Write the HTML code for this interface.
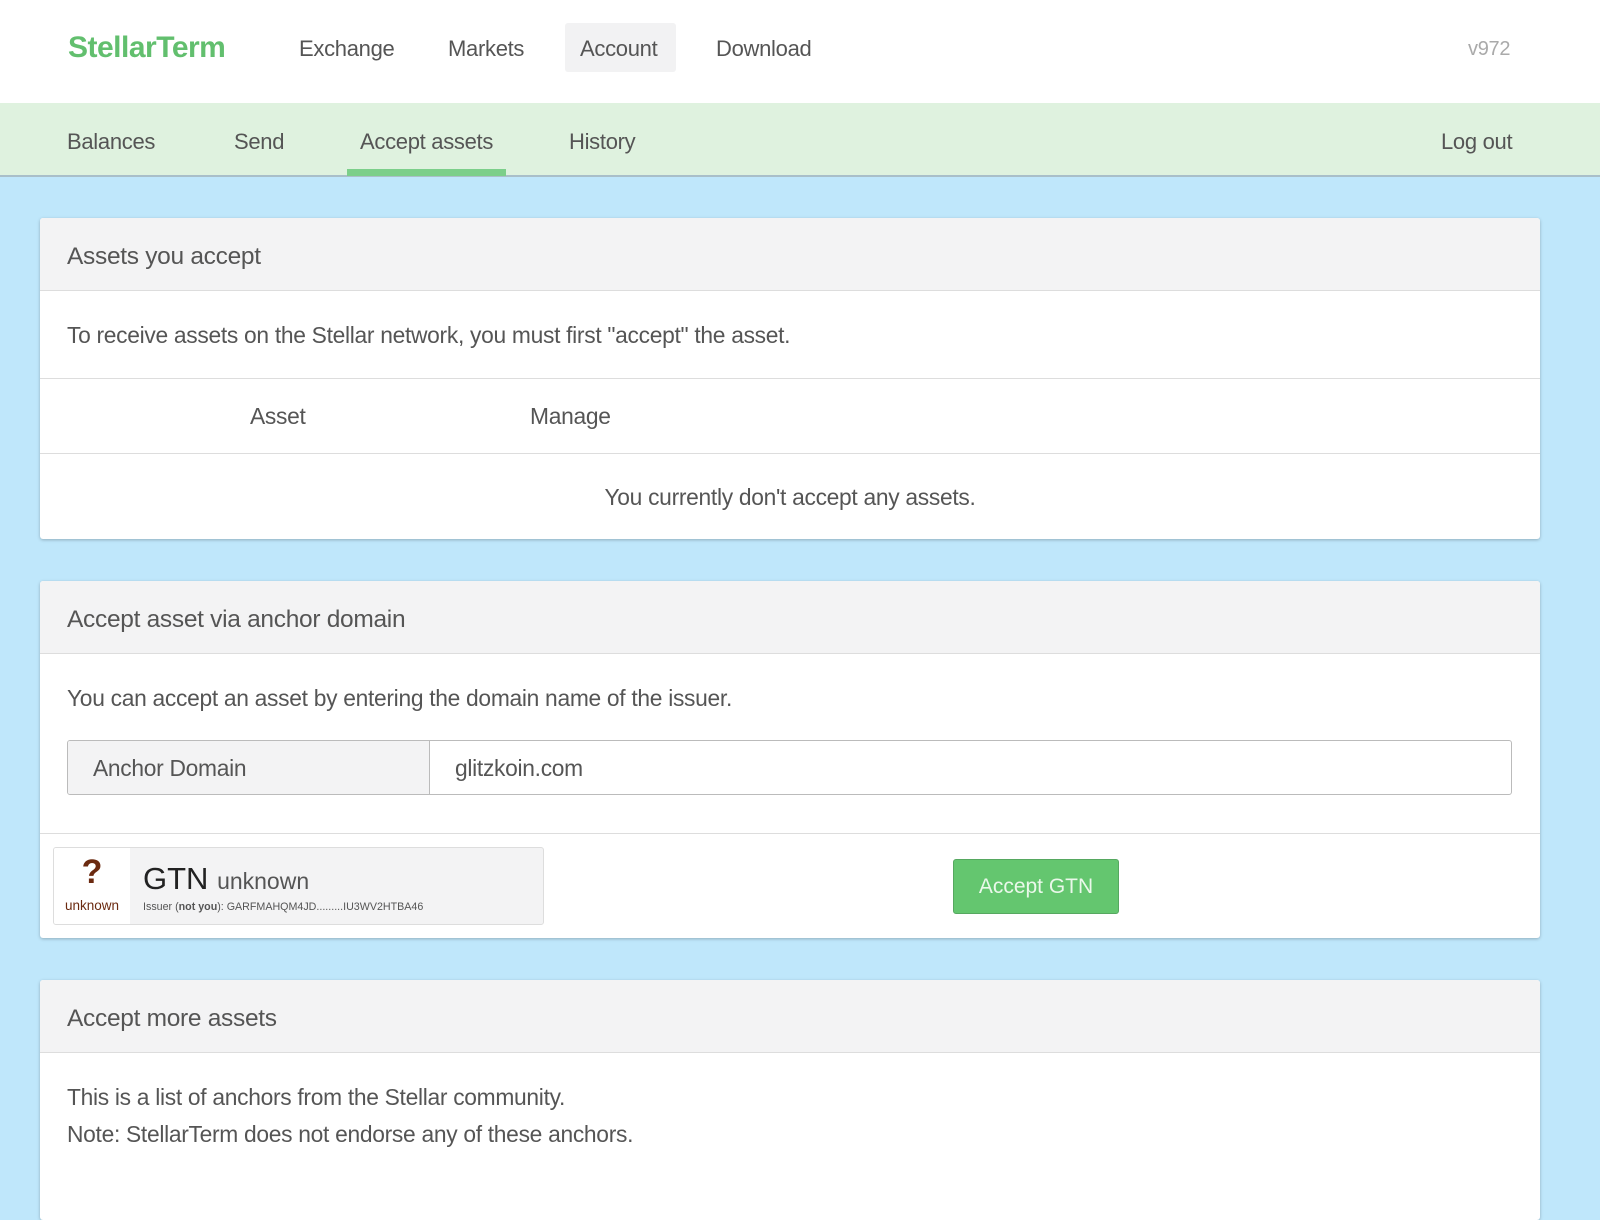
<!DOCTYPE html>
<html><head><meta charset="utf-8"><style>
*{box-sizing:border-box;margin:0;padding:0}
body{width:1600px;height:1196px;overflow:hidden;background:#bfe7fb;font-family:"Liberation Sans",sans-serif;color:#444;position:relative}
.a{position:absolute;white-space:nowrap}
.hdr{position:absolute;left:0;top:0;width:1600px;height:103px;background:#fff}
.sub{position:absolute;left:0;top:103px;width:1600px;height:74px;background:#dff2df;border-bottom:2px solid #a9bfc9}
.nav{font-size:22px;color:#555;letter-spacing:-0.3px}
.card{position:absolute;left:40px;width:1500px;background:#fff;border-radius:3px;box-shadow:0 1px 3px rgba(0,0,0,.25);overflow:hidden}
.ch{height:73px;background:#f3f3f4;border-bottom:1px solid #ddd;position:relative}
.t{font-size:22px;color:#555;letter-spacing:-0.3px}
.b{font-size:22.8px}
.h{font-size:24.5px;top:25px!important}
.line{position:absolute;left:0;width:1500px;height:1px;background:#ddd}
</style></head><body>
<div class="hdr">
 <div class="a" style="left:68px;top:31px;font-size:30px;font-weight:bold;color:#62bf6e;letter-spacing:-0.5px">StellarTerm</div>
 <div class="a" style="left:565px;top:23px;width:111px;height:49px;background:#f2f2f3;border-radius:3px"></div>
 <div class="a nav" style="left:299px;top:36px">Exchange</div>
 <div class="a nav" style="left:448px;top:36px">Markets</div>
 <div class="a nav" style="left:580px;top:36px">Account</div>
 <div class="a nav" style="left:716px;top:36px">Download</div>
 <div class="a nav" style="left:1468px;top:38px;color:#aaa;font-size:20px">v972</div>
</div>
<div class="sub">
 <div class="a nav" style="left:67px;top:26px">Balances</div>
 <div class="a nav" style="left:234px;top:26px">Send</div>
 <div class="a nav" style="left:360px;top:26px">Accept assets</div>
 <div class="a nav" style="left:569px;top:26px">History</div>
 <div class="a nav" style="left:1441px;top:26px">Log out</div>
 <div class="a" style="left:347px;top:66px;width:159px;height:7px;background:#7ccf8a"></div>
</div>

<div class="card" style="top:218px;height:321px">
 <div class="ch"><div class="a t h" style="left:27px">Assets you accept</div></div>
 <div class="a t b" style="left:27px;top:104px">To receive assets on the Stellar network, you must first "accept" the asset.</div>
 <div class="line" style="top:160px"></div>
 <div class="a t b" style="left:210px;top:185px">Asset</div>
 <div class="a t b" style="left:490px;top:185px">Manage</div>
 <div class="line" style="top:235px"></div>
 <div class="a t b" style="left:0;width:1500px;text-align:center;top:266px">You currently don't accept any assets.</div>
</div>

<div class="card" style="top:581px;height:357px">
 <div class="ch"><div class="a t h" style="left:27px">Accept asset via anchor domain</div></div>
 <div class="a t b" style="left:27px;top:104px">You can accept an asset by entering the domain name of the issuer.</div>
 <div class="a" style="left:27px;top:159px;width:1445px;height:55px;border:1px solid #bbb;border-radius:3px;overflow:hidden">
  <div class="a" style="left:0;top:0;width:362px;height:53px;background:#f3f3f4;border-right:1px solid #bbb"></div>
  <div class="a t b" style="left:25px;top:14px">Anchor Domain</div>
  <div class="a t b" style="left:387px;top:14px">glitzkoin.com</div>
 </div>
 <div class="line" style="top:252px"></div>
 <div class="a" style="left:13px;top:266px;width:491px;height:78px;border:1px solid #ddd;border-radius:3px;background:#f3f3f4;overflow:hidden">
  <div class="a" style="left:0;top:0;width:76px;height:76px;background:#fff"></div>
  <div class="a" style="left:0;width:76px;text-align:center;top:5px;font-size:34px;font-weight:bold;color:#6b2a10">?</div>
  <div class="a" style="left:0;width:76px;text-align:center;top:50px;font-size:13.5px;color:#6b2a10">unknown</div>
  <div class="a" style="left:89px;top:13px;font-size:31px;color:#222">GTN <span style="font-size:23px;color:#555">unknown</span></div>
  <div class="a" style="left:89px;top:53px;font-size:10.7px;color:#555">Issuer (<b>not you</b>): GARFMAHQM4JD.........IU3WV2HTBA46</div>
 </div>
 <div class="a" style="left:913px;top:278px;width:166px;height:55px;background:#64c66f;border:1px solid #56a860;border-radius:3px;color:#eaf8ea;font-size:21px;text-align:center;line-height:53px">Accept GTN</div>
</div>

<div class="card" style="top:980px;height:240px">
 <div class="ch"><div class="a t h" style="left:27px">Accept more assets</div></div>
 <div class="a t b" style="left:27px;top:104px">This is a list of anchors from the Stellar community.</div>
 <div class="a t b" style="left:27px;top:141px">Note: StellarTerm does not endorse any of these anchors.</div>
</div>
</body></html>
